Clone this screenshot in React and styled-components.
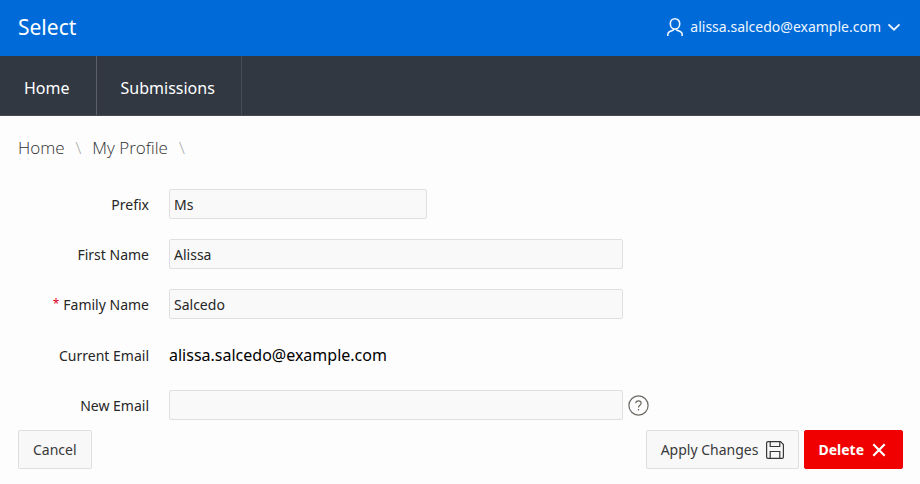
import React from "react";
import styled, { createGlobalStyle, css } from "styled-components";

const GlobalStyle = createGlobalStyle`
  *, *::before, *::after { box-sizing: border-box; }
  body {
    margin: 0;
    background: #fdfdfd;
    color: #262626;
    font-family: "Noto Sans", "Open Sans", sans-serif;
    font-size: 14px;
    line-height: 20px;
  }
  button, input { font: inherit; }
`;

const Header = styled.header`
  display: flex;
  align-items: center;
  justify-content: space-between;
  min-height: 56px;
  padding: 0 19px 2px 18px;
  background: #006bd8;
  color: #fff;
`;

const Brand = styled.a`
  color: inherit;
  font-size: 21px;
  line-height: 28px;
  text-decoration: none;
`;

const UserButton = styled.button`
  display: flex;
  align-items: center;
  gap: 6px;
  padding: 0;
  border: 0;
  background: none;
  color: #eef5fd;
  cursor: pointer;
`;

const Icon = styled.svg`
  flex: none;
  display: block;
  fill: none;
  stroke: currentColor;
  stroke-width: ${({ $weight = 1 }) => $weight};
`;

const Nav = styled.nav`
  display: flex;
  min-height: 60px;
  background: #313842;
  border-bottom: 1px solid #464c55;
`;

const NavLink = styled.a`
  display: flex;
  align-items: center;
  padding: 4px 26px 0 24px;
  border-right: 1px solid ${({ $active }) => ($active ? "#5b6068" : "#464c55")};
  color: #fff;
  font-size: 16px;
  line-height: 24px;
  text-decoration: none;
`;

const Breadcrumb = styled.nav`
  display: flex;
  gap: 11px;
  padding: 20px 18px 0;
  color: #a6a6a6;
  font-family: "Open Sans", "Noto Sans", sans-serif;
  font-size: 17px;
  font-weight: 300;
  line-height: 24px;
`;

const Crumb = styled.a`
  color: #303030;
  text-decoration: none;
`;

const Form = styled.form`
  padding: 29px 17px 15px 18px;
`;

const Fields = styled.div`
  display: grid;
  row-gap: 20px;
`;

const Row = styled.div`
  display: grid;
  grid-template-columns: 131px minmax(0, 1fr);
  column-gap: 20px;
  align-items: center;
  min-height: 30px;
`;

const labelText = css`
  padding-top: 2px;
  text-align: right;
  white-space: nowrap;
`;

const Label = styled.label`
  ${labelText}
`;

const Term = styled.span`
  ${labelText}
`;

const Required = styled.span`
  margin-right: 4px;
  color: #e00020;
  font-size: 12px;
  vertical-align: 2px;
  line-height: 12px;
`;

const Control = styled.div`
  display: flex;
  align-items: center;
  gap: 5px;
`;

const TextInput = styled.input`
  flex: 0 1 ${({ $short }) => ($short ? "258px" : "454px")};
  min-width: 0;
  height: 30px;
  padding: 4px;
  border: 1px solid #dfdfdf;
  border-radius: 2px;
  background: #f9f9f9;
  color: #262626;
`;

const Value = styled.output`
  padding: 4px 0 3px;
  color: #000;
  font-size: 16px;
  line-height: 24px;
`;

const HelpButton = styled.button`
  display: block;
  padding: 0;
  border: 0;
  background: none;
  color: #6b6762;
  cursor: pointer;
`;

const Actions = styled.div`
  display: flex;
  gap: 5px;
  padding-top: 10px;
`;

const Button = styled.button`
  display: flex;
  align-items: center;
  gap: 8px;
  height: 39px;
  padding: ${({ $danger }) => ($danger ? "0 16px 0 13px" : "0 14px")};
  border: 1px solid ${({ $danger }) => ($danger ? "#f00000" : "#dfdfdf")};
  border-radius: 2px;
  background: ${({ $danger }) => ($danger ? "#f00000" : "#f8f8f8")};
  color: ${({ $danger }) => ($danger ? "#fff" : "#383838")};
  font-weight: ${({ $danger }) => ($danger ? 700 : 400)};
  white-space: nowrap;
  cursor: pointer;
`;

const Spacer = styled.span`
  flex: 1;
`;

function UserIcon() {
  return (
    <Icon width="18" height="20" viewBox="0 0 18 20" $weight={1.6} aria-hidden="true">
      <path d="M9 1.800C6.300 1.800 4.300 3.800 4.300 6.700S6.300 12 9 12s4.700-2.400 4.700-5.300S11.700 1.800 9 1.800Z" />
      <path d="M1.800 19v-1.500c0-1.500.7-2.300 2-2.900L7 13.200c.7-.3 1-.7 1-1.400M16.200 19v-1.500c0-1.500-.7-2.300-2-2.900L11 13.200c-.7-.3-1-.7-1-1.400" />
    </Icon>
  );
}

function ChevronIcon() {
  return (
    <Icon width="14" height="10" viewBox="0 0 14 10" $weight={1.8} aria-hidden="true">
      <path d="M1.500 2.300 7 7.700l5.500-5.400" />
    </Icon>
  );
}

function HelpIcon() {
  return (
    <Icon width="21" height="21" viewBox="0 0 21 21" $weight={1.2} aria-hidden="true">
      <circle cx="10.500" cy="10.500" r="9.600" />
      <path d="M7.800 8.300c0-1.600 1.100-2.500 2.700-2.500s2.700.9 2.700 2.300c0 2.200-2.700 2.100-2.700 4.500M10.500 14v1.500" />
    </Icon>
  );
}

function SaveIcon() {
  return (
    <Icon width="18" height="18" viewBox="0 0 18 18" $weight={1.2} aria-hidden="true">
      <path d="M2 .6h12.500l2.900 2.900V16c0 .8-.6 1.400-1.400 1.400H2C1.200 17.400.6 16.800.6 16V2C.6 1.200 1.200.6 2 .6Z" />
      <path d="M4.200.6v4.900h9.600V.6M4.200 17.400v-6.900h9.600v6.900" />
    </Icon>
  );
}

function CloseIcon() {
  return (
    <Icon width="14" height="14" viewBox="0 0 14 14" $weight={2.2} aria-hidden="true">
      <path d="m1.300 1.300 11.400 11.400m0-11.400L1.300 12.700" />
    </Icon>
  );
}

const fields = [
  { id: "prefix", label: "Prefix", value: "Ms", short: true },
  { id: "first-name", label: "First Name", value: "Alissa" },
  { id: "family-name", label: "Family Name", value: "Salcedo", required: true },
];

export default function App() {
  return (
    <>
      <GlobalStyle />
      <Header>
        <Brand href="#">Select</Brand>
        <UserButton type="button">
          <UserIcon />
          alissa.salcedo@example.com
          <ChevronIcon />
        </UserButton>
      </Header>
      <Nav aria-label="Main">
        <NavLink href="#home" $active>Home</NavLink>
        <NavLink href="#submissions">Submissions</NavLink>
      </Nav>
      <Breadcrumb aria-label="Breadcrumb">
        <Crumb href="#home">Home</Crumb>
        <span>\</span>
        <Crumb href="#profile">My Profile</Crumb>
        <span>\</span>
      </Breadcrumb>
      <Form onSubmit={(event) => event.preventDefault()}>
        <Fields>
          {fields.map(({ id, label, value, short, required }) => (
            <Row key={id}>
              <Label htmlFor={id}>
                {required && <Required>*</Required>}
                {label}
              </Label>
              <Control>
                <TextInput id={id} defaultValue={value} $short={short} required={required} />
              </Control>
            </Row>
          ))}
          <Row>
            <Term id="current-email-label">Current Email</Term>
            <Value aria-labelledby="current-email-label">alissa.salcedo@example.com</Value>
          </Row>
          <Row>
            <Label htmlFor="new-email">New Email</Label>
            <Control>
              <TextInput id="new-email" type="email" />
              <HelpButton type="button" aria-label="Help">
                <HelpIcon />
              </HelpButton>
            </Control>
          </Row>
        </Fields>
        <Actions>
          <Button type="button">Cancel</Button>
          <Spacer />
          <Button type="submit">
            Apply Changes
            <SaveIcon />
          </Button>
          <Button type="button" $danger>
            Delete
            <CloseIcon />
          </Button>
        </Actions>
      </Form>
    </>
  );
}
